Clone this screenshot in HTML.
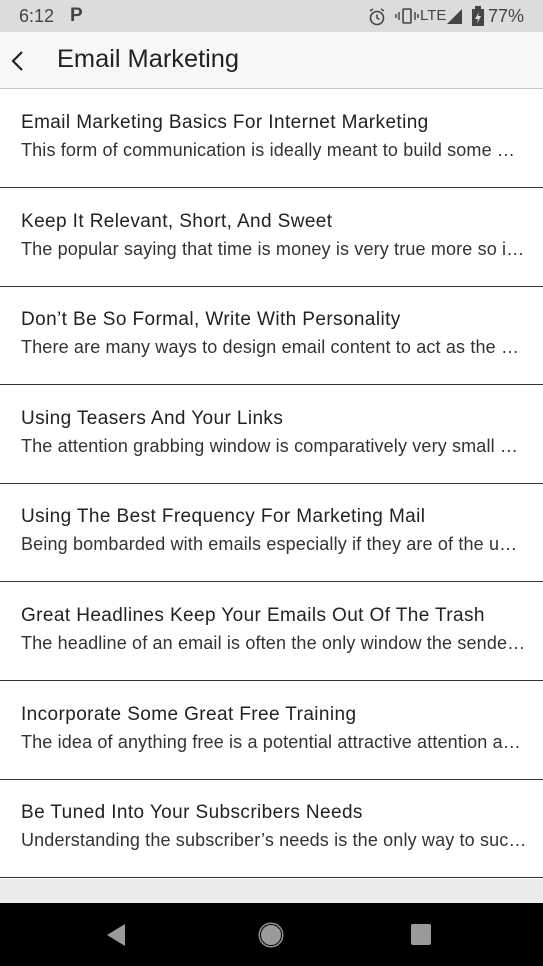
<!DOCTYPE html>
<html><head><meta charset="utf-8"><style>
*{margin:0;padding:0;box-sizing:border-box}
body{width:543px;height:966px;overflow:hidden;background:#fff;font-family:"Liberation Sans",sans-serif;position:relative}
.sb{position:absolute;top:0;left:0;width:543px;height:32px;background:#dcdcdc;color:#444;font-size:18px}
.ab{position:absolute;top:32px;left:0;width:543px;height:57px;background:#f7f7f7;border-bottom:1px solid #c8c8c8}
.ab .t{position:absolute;left:57px;top:13px;font-size:25.4px;color:#222}
.it{position:absolute;left:0;width:543px;height:99px;border-bottom:1.5px solid #333}
.it .h{position:absolute;left:21px;top:23px;font-size:19px;letter-spacing:0.4px;color:#222;white-space:nowrap}
.it .s{position:absolute;left:21px;top:51px;font-size:18px;letter-spacing:0.15px;color:#333;white-space:nowrap}
.gap{position:absolute;top:879px;left:0;width:543px;height:24px;background:#ebebeb}
.nav{position:absolute;top:903px;left:0;width:543px;height:63px;background:#000}
</style></head><body>
<div class="sb">
<span style="position:absolute;left:19px;top:6px">6:12</span>
<span style="position:absolute;left:70px;top:5px;font-weight:bold;font-size:19px">P</span>
<svg style="position:absolute;left:367px;top:7px" width="20" height="20" viewBox="0 0 20 20"><circle cx="10" cy="11" r="6.5" fill="none" stroke="#444" stroke-width="1.6"/><path d="M10 7.5V11l2.5 1.5M3 4l3-2M17 4l-3-2" stroke="#444" stroke-width="1.5" fill="none"/></svg>
<svg style="position:absolute;left:395px;top:7px" width="24" height="18" viewBox="0 0 24 18"><rect x="8" y="2" width="8" height="14" rx="1" fill="none" stroke="#444" stroke-width="1.6"/><path d="M4 5v8M1 7v4M20 5v8M23 7v4" stroke="#444" stroke-width="1.5"/></svg>
<span style="position:absolute;left:420px;top:7px;font-size:15px">LTE</span>
<svg style="position:absolute;left:447px;top:9px" width="16" height="15"><path d="M0 15L15 0V15Z" fill="#444"/></svg>
<svg style="position:absolute;left:472px;top:6px" width="12" height="20"><rect x="0" y="3" width="12" height="17" fill="#444"/><rect x="3" y="0" width="6" height="3" fill="#444"/><path d="M7 6L3 13h3l-1 5 4-8H6z" fill="#ddd"/></svg>
<span style="position:absolute;left:488px;top:6px">77%</span>
</div>
<div class="ab">
<svg style="position:absolute;left:10px;top:18px" width="16" height="22"><path d="M12 2L3 11l9 9" fill="none" stroke="#222" stroke-width="2.2"/></svg>
<div class="t">Email Marketing</div>
</div>
<div class="it" style="top:89px"><div class="h">Email Marketing Basics For Internet Marketing</div><div class="s">This form of communication is ideally meant to build some …</div></div>
<div class="it" style="top:188px"><div class="h">Keep It Relevant, Short, And Sweet</div><div class="s">The popular saying that time is money is very true more so i…</div></div>
<div class="it" style="top:286px"><div class="h">Don’t Be So Formal, Write With Personality</div><div class="s">There are many ways to design email content to act as the …</div></div>
<div class="it" style="top:385px"><div class="h">Using Teasers And Your Links</div><div class="s">The attention grabbing window is comparatively very small …</div></div>
<div class="it" style="top:483px"><div class="h">Using The Best Frequency For Marketing Mail</div><div class="s">Being bombarded with emails especially if they are of the u…</div></div>
<div class="it" style="top:582px"><div class="h">Great Headlines Keep Your Emails Out Of The Trash</div><div class="s">The headline of an email is often the only window the sende…</div></div>
<div class="it" style="top:681px"><div class="h">Incorporate Some Great Free Training</div><div class="s">The idea of anything free is a potential attractive attention a…</div></div>
<div class="it" style="top:779px"><div class="h">Be Tuned Into Your Subscribers Needs</div><div class="s">Understanding the subscriber’s needs is the only way to suc…</div></div>
<div class="gap"></div>
<div class="nav">
<svg style="position:absolute;left:106px;top:20px" width="20" height="24"><path d="M19 1V23L1 12Z" fill="#9a9a9a"/></svg>
<svg style="position:absolute;left:258px;top:19px" width="26" height="26"><circle cx="13" cy="13" r="11" fill="#9a9a9a" stroke="#9a9a9a"/><circle cx="13" cy="13" r="10.5" fill="none" stroke="#000" stroke-width="1"/><circle cx="13" cy="13" r="12" fill="none" stroke="#9a9a9a" stroke-width="1"/></svg>
<div style="position:absolute;left:411px;top:21px;width:20px;height:21px;background:#9a9a9a;border-radius:2px"></div>
</div>
</body></html>
